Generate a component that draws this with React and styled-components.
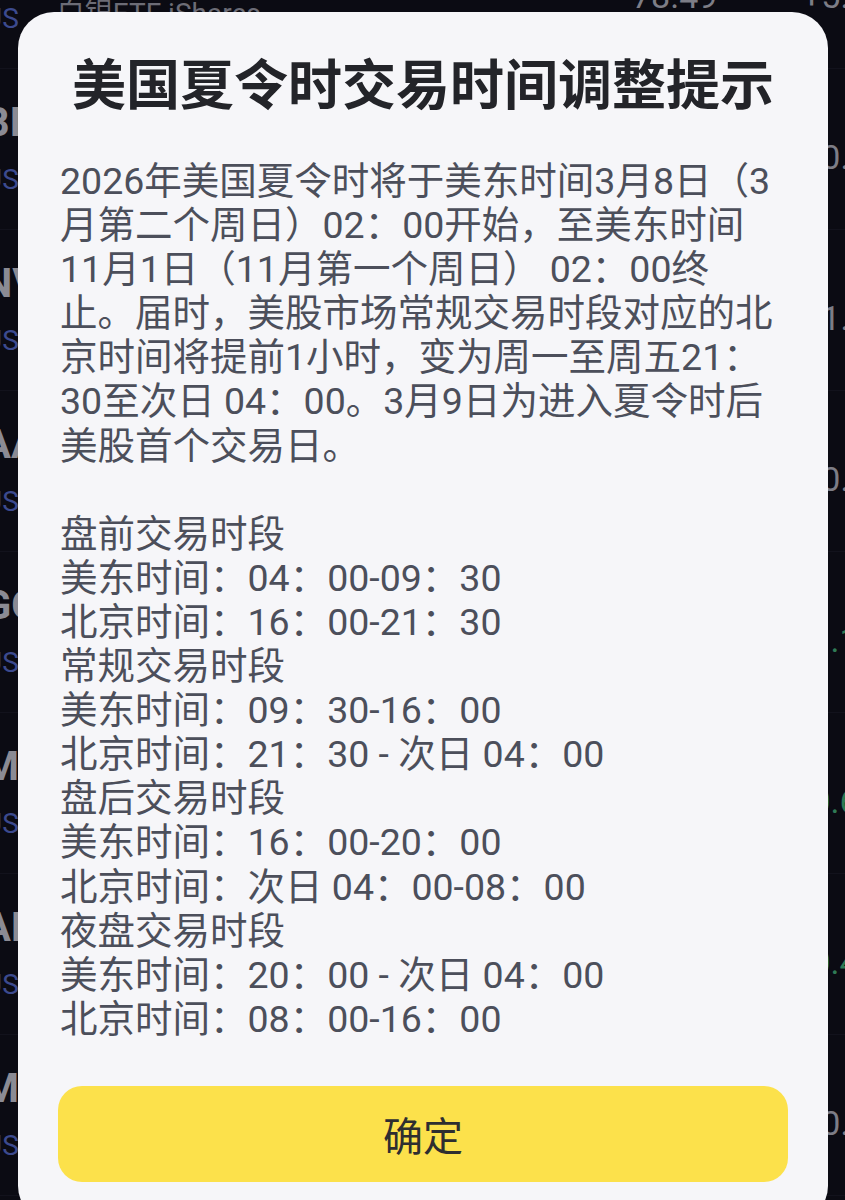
import React from 'react';
import styled, { createGlobalStyle } from 'styled-components';

const GlobalStyle = createGlobalStyle`
  html, body {
    margin: 0;
    padding: 0;
    background: #0b0b13;
  }
  body {
    font-family: "Roboto", "Noto Sans CJK SC", sans-serif;
  }
`;

const Screen = styled.div`
  position: relative;
  width: 845px;
  height: 1200px;
  overflow: hidden;
  background: #0b0b13;
`;

const StockList = styled.div`
  display: flex;
  flex-direction: column;
  margin-top: -92px;
  margin-left: -16px;
`;

const StockRow = styled.div`
  display: grid;
  grid-template-columns: 648px 170px 140px;
  align-items: center;
  height: 161px;
  border-bottom: 1px solid #12121c;
  box-sizing: border-box;
`;

const StockInfo = styled.div`
  display: flex;
  flex-direction: column;
  gap: 12px;
`;

const Ticker = styled.div`
  font-size: 40px;
  line-height: 50px;
  font-weight: 700;
  color: #8b8b94;
`;

const MarketLine = styled.div`
  display: flex;
  align-items: center;
  gap: 38px;
  font-size: 28px;
  line-height: 40px;
`;

const Market = styled.span`
  color: #3c4a8e;
`;

const StockName = styled.span`
  color: #6c6c76;
  margin-top: -10px;
`;

const Price = styled.div`
  margin-top: 16px;
  font-size: 34px;
  color: #7d7d86;
`;

const Change = styled.div`
  margin-top: 16px;
  font-size: 34px;
  color: ${(p) => (p.$down ? '#2f7a55' : '#7d7d86')};
`;

const Dialog = styled.div`
  position: absolute;
  top: 12px;
  left: 18px;
  width: 810px;
  box-sizing: border-box;
  padding: 35px 40px 40px;
  background: #f6f6f9;
  border-radius: 36px;
  display: flex;
  flex-direction: column;
`;

const Title = styled.h2`
  margin: 0;
  font-family: "Noto Sans CJK SC", sans-serif;
  font-size: 54px;
  line-height: 69px;
  font-weight: 700;
  text-align: center;
  color: #232429;
`;

const Body = styled.div`
  margin-top: 43px;
  padding-left: 2px;
  font-size: 37.5px;
  line-height: 44.1px;
  color: #4c4f5b;
`;

const Line = styled.div`
  white-space: nowrap;
  min-height: 44.1px;
`;

const ConfirmButton = styled.button`
  margin-top: 45px;
  height: 96px;
  border: none;
  border-radius: 24px;
  background: #fce14b;
  color: #2e2e30;
  font-family: "Noto Sans CJK SC", sans-serif;
  font-size: 40px;
  cursor: pointer;
`;

const stocks = [
  { ticker: 'SLV', name: '白银ETF iShares', price: '78.49', change: '+5.12%' },
  { ticker: 'BILI', name: '哔哩哔哩', price: '22.67', change: '+0.93%' },
  { ticker: 'NVDA', name: '英伟达', price: '183.14', change: '+1.46%' },
  { ticker: 'AAPL', name: '苹果', price: '255.41', change: '+0.35%' },
  { ticker: 'GOOG', name: '谷歌-C', price: '330.27', change: '-1.18%', down: true },
  { ticker: 'MSFT', name: '微软', price: '401.32', change: '-0.64%', down: true },
  { ticker: 'AMZN', name: '亚马逊', price: '210.32', change: '-0.47%', down: true },
  { ticker: 'META', name: 'Meta Platforms', price: '639.77', change: '+0.71%' },
];

const notice = [
  '2026年美国夏令时将于美东时间3月8日（3',
  '月第二个周日）02：00开始，至美东时间',
  '11月1日（11月第一个周日） 02：00终',
  '止。届时，美股市场常规交易时段对应的北',
  '京时间将提前1小时，变为周一至周五21：',
  '30至次日 04：00。3月9日为进入夏令时后',
  '美股首个交易日。',
  '',
  '盘前交易时段',
  '美东时间：04：00-09：30',
  '北京时间：16：00-21：30',
  '常规交易时段',
  '美东时间：09：30-16：00',
  '北京时间：21：30 - 次日 04：00',
  '盘后交易时段',
  '美东时间：16：00-20：00',
  '北京时间：次日 04：00-08：00',
  '夜盘交易时段',
  '美东时间：20：00 - 次日 04：00',
  '北京时间：08：00-16：00',
];

export default function App() {
  return (
    <>
      <GlobalStyle />
      <Screen>
        <StockList>
          {stocks.map((s) => (
            <StockRow key={s.ticker}>
              <StockInfo>
                <Ticker>{s.ticker}</Ticker>
                <MarketLine>
                  <Market>US</Market>
                  <StockName>{s.name}</StockName>
                </MarketLine>
              </StockInfo>
              <Price>{s.price}</Price>
              <Change $down={s.down}>{s.change}</Change>
            </StockRow>
          ))}
        </StockList>

        <Dialog>
          <Title>美国夏令时交易时间调整提示</Title>
          <Body>
            {notice.map((text, i) => (
              <Line key={i}>{text}</Line>
            ))}
          </Body>
          <ConfirmButton>确定</ConfirmButton>
        </Dialog>
      </Screen>
    </>
  );
}
